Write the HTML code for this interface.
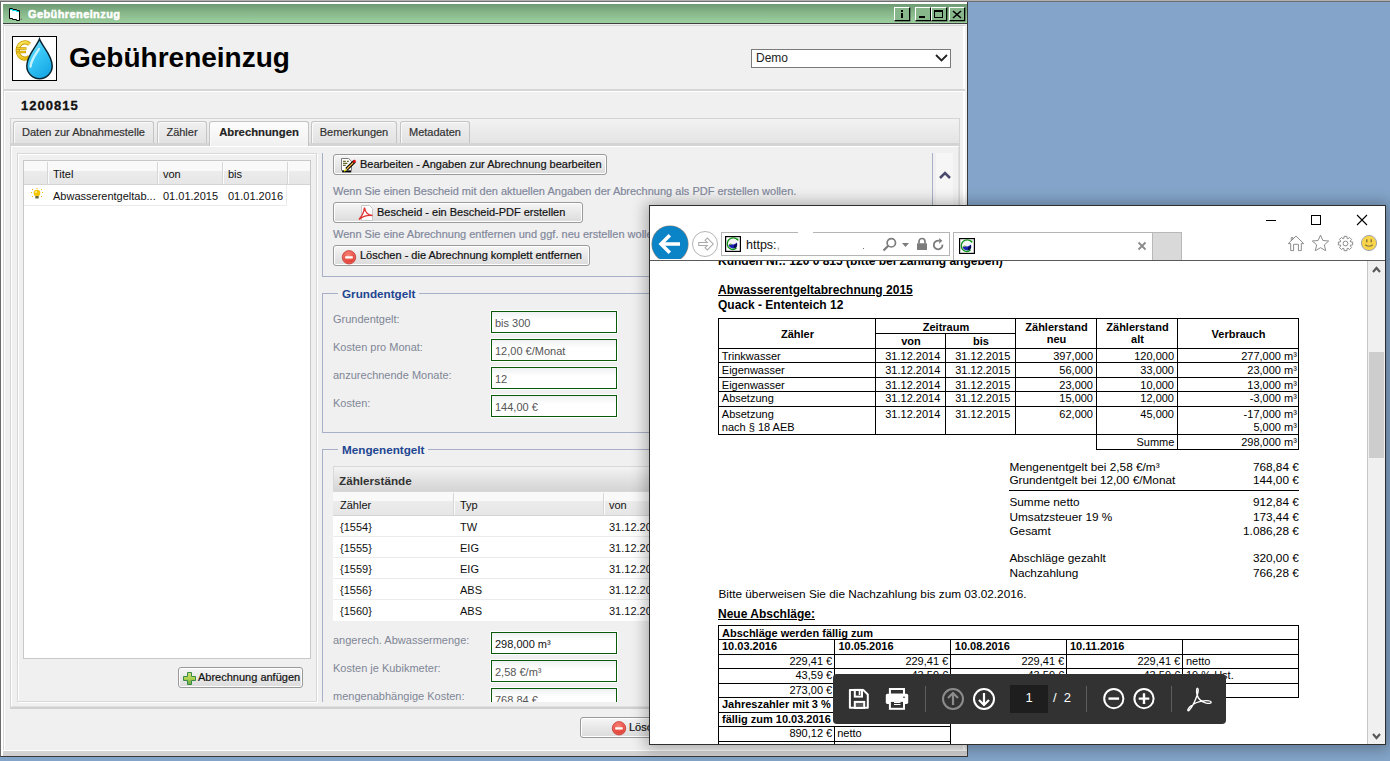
<!DOCTYPE html>
<html><head><meta charset="utf-8">
<style>
*{box-sizing:border-box;margin:0;padding:0}
html,body{width:1390px;height:761px;overflow:hidden}
body{background:#84a5c9;font-family:"Liberation Sans",sans-serif;font-size:11px;line-height:13px;color:#000;position:relative}
.a{position:absolute;white-space:nowrap}
#main{left:0;top:2px;width:968px;height:755px;background:#f0f0f0;border-left:1px solid #6a6a6a;border-bottom:1px solid #3a3a3a;border-right:1px solid #3a3a3a}
.tbar{left:3px;top:4px;width:964px;height:20px;background:linear-gradient(#6e9a72,#86b689 45%,#9ccf9f);border-bottom:1px solid #404040}
.ttl{left:28px;top:8px;color:#fff;font-weight:bold;font-size:11px;letter-spacing:0.4px;-webkit-text-stroke:.5px #fff}
.wb{width:16px;height:14px;top:7px;border-top:1px solid #fff;border-left:1px solid #fff;border-right:1px solid #000;border-bottom:1px solid #000;box-shadow:.5px .5px 0 rgba(0,0,0,.6);background:#88b68b}
.tab{-webkit-text-stroke:.2px #333;top:121px;height:22px;border:1px solid #c4c4c4;border-bottom:0;border-radius:3px 3px 0 0;background:linear-gradient(#f0f0f0,#e2e2e2);text-align:center;line-height:21px;color:#333;box-shadow:inset 1px 1px 0 #fafafa}
.tab.act{top:121px;height:25px;background:linear-gradient(#fdfdfd,#f0f0f0);font-weight:bold;color:#222;font-size:11.3px;z-index:2}
.vs{width:1px;height:22px;background:#d6d6d6;box-shadow:1px 0 0 #fcfcfc}
.btn{border:1px solid #9a9a9a;border-radius:3px;background:linear-gradient(#f6f6f6,#e8e8e8 50%,#dcdcdc);box-shadow:inset 0 0 0 1px #fff}
.gt{color:#7e8599;-webkit-text-stroke:.2px #8a90a4}
.fs{border:1px solid #a8b0c8}
.lg{font-size:11.7px;font-weight:bold;color:#1e4690;background:#f0f0f0;padding:0 4px;line-height:15px}
.lb{color:#7f8696}
.inp{width:126px;height:22px;border:1px solid #0a5a0a;background:linear-gradient(#eef0f2,#fff 40%);box-shadow:0 0 0 1px #fff;padding:5px 0 0 3px;color:#555}
.rw{left:17px;width:600px;height:21px;border-bottom:1px solid #ececec;background:#fff;color:#111}
.rw span{position:absolute;top:5px}
.ln{background:#000}
.fav{width:16px;height:16px;border:1px solid #000;background:radial-gradient(circle at 45% 40%,#f4f4f4 0,#9ab 30%,#2a3a9a 55%,#1a6a1a 80%,#fff 82%)}
.tk{-webkit-text-stroke:.2px #111}
</style></head>
<body>
<div class="a" style="left:0;top:0;width:1390px;height:1px;background:#b0b0b0"></div>
<div class="a" style="left:0;top:1px;width:1390px;height:1px;background:#6e6e6e"></div>
<!-- MAIN WINDOW -->
<div id="main" class="a"></div>
<div class="a" style="left:1px;top:2px;width:966px;height:2px;background:#fff"></div>
<div class="a" style="left:1px;top:2px;width:2px;height:754px;background:#fff"></div>
<div class="a" style="left:3px;top:25px;width:2px;height:726px;background:#d6d6d6;border-right:1px solid #fff"></div>
<div class="a" style="left:3px;top:750px;width:964px;height:6px;background:linear-gradient(#fff 0,#fff 1px,#d4d4d4 1px,#cfcfcf)"></div>
<div class="a" style="left:963px;top:25px;width:2px;height:726px;background:#fff"></div>
<div class="a tbar"></div>
<div class="a" style="left:3px;top:25px;width:962px;height:1px;background:#d6d6d6"></div>
<svg class="a" style="left:8px;top:7px" width="14" height="14" viewBox="0 0 14 14"><path d="M1.5 1.5h3l0 1h4l0 1h3v10h-3v-1h-4v-1h-3z" fill="#fff" stroke="#000" stroke-width="1"/><path d="M2 2.5h2.5v1h4v1h2.5" stroke="#00e0f0" stroke-width="1" fill="none"/><path d="M12 13l2-2v2z" fill="#777"/></svg>
<div class="a ttl">Gebühreneinzug</div>
<div class="a wb" style="left:894px"><div class="a" style="left:6px;top:2px;width:2px;height:2px;background:#000"></div><div class="a" style="left:6px;top:5px;width:2px;height:5px;background:#000"></div></div>
<div class="a wb" style="left:915px"><div class="a" style="left:3px;top:8px;width:6px;height:2px;background:#000"></div></div>
<div class="a wb" style="left:931px"><div class="a" style="left:2px;top:2px;width:9px;height:8px;border:1px solid #000;border-top-width:2px"></div></div>
<div class="a wb" style="left:949px"><svg class="a" style="left:2px;top:2px" width="10" height="9"><path d="M1 1l8 7M9 1l-8 7" stroke="#000" stroke-width="1.6"/></svg></div>

<!-- header -->
<div class="a" style="left:12px;top:36px;width:45px;height:45px;background:#fff;border:1px solid #000"></div>
<svg class="a" style="left:13px;top:37px" width="43" height="43" viewBox="0 0 43 43">
 <defs><linearGradient id="dg" x1="0" y1="0" x2="0.6" y2="1"><stop offset="0" stop-color="#a4eeff"/><stop offset=".45" stop-color="#3ccaf8"/><stop offset="1" stop-color="#18aae6"/></linearGradient>
 <linearGradient id="eg" x1="0" y1="0" x2="1" y2="1"><stop offset="0" stop-color="#fff070"/><stop offset="1" stop-color="#e0b000"/></linearGradient></defs>
 <path d="M16.5 7.2 A7.2 8.2 0 1 0 16.5 19.8" fill="none" stroke="#c89a00" stroke-width="4.2"/>
 <path d="M16.5 7.2 A7.2 8.2 0 1 0 16.5 19.8" fill="none" stroke="url(#eg)" stroke-width="2.6"/>
 <path d="M3 11.5h10.5M3 15h10" stroke="#c89a00" stroke-width="2.6"/>
 <path d="M3.5 11.5h9.5M3.5 15h9" stroke="#f2cc20" stroke-width="1.2"/>
 <path d="M26.5 2 C29.5 10 39.2 18 39.2 29 A12.7 12.7 0 0 1 13.8 29 C13.8 18 23.5 10 26.5 2Z" fill="url(#dg)" stroke="#0b2633" stroke-width="1.5"/>
 <path d="M26 12 C23 17 18.5 22 17.5 29.5" stroke="#c6f2ff" stroke-width="2.4" fill="none" stroke-linecap="round"/>
</svg>
<div class="a" style="left:69px;top:42px;font-size:28px;font-weight:bold;line-height:32px">Gebühreneinzug</div>
<div class="a" style="left:751px;top:49px;width:200px;height:19px;background:#fff;border:1px solid #7a7a7a"></div>
<div class="a" style="left:756px;top:50px;font-size:12px;line-height:16px;color:#222">Demo</div>
<svg class="a" style="left:935px;top:54px" width="13" height="8"><path d="M1 1l5.5 5.5L12 1" stroke="#222" stroke-width="1.8" fill="none"/></svg>
<div class="a" style="left:3px;top:89px;width:962px;height:2px;background:#d6d6d6"></div>
<div class="a" style="left:5px;top:91px;width:958px;height:1px;background:#fff"></div>
<div class="a" style="left:21px;top:98px;font-size:13px;font-weight:bold;letter-spacing:1px;line-height:16px;color:#111;-webkit-text-stroke:.3px #111">1200815</div>

<!-- tab panel -->
<div class="a" style="left:10px;top:118px;width:950px;height:591px;border:1px solid #d4d4d4;border-bottom:2px solid #d0d0d0;background:#f0f0f0"></div>
<div class="a" style="left:11px;top:119px;width:948px;height:24px;background:linear-gradient(#f2f2f2,#e4e4e4)"></div>
<div class="a" style="left:11px;top:143px;width:948px;height:3px;background:#d4d4d4"></div>
<div class="a" style="left:11px;top:146px;width:948px;height:561px;border:1px solid #fff;border-right-color:#e0e0e0;border-bottom-color:#e0e0e0"></div>
<div class="a tab" style="left:13px;width:141px">Daten zur Abnahmestelle</div>
<div class="a tab" style="left:157px;width:50px">Zähler</div>
<div class="a tab act" style="left:209px;width:100px">Abrechnungen</div>
<div class="a tab" style="left:311px;width:86px">Bemerkungen</div>
<div class="a tab" style="left:400px;width:70px">Metadaten</div>

<!-- left list group -->
<div class="a" style="left:17px;top:153px;width:300px;height:549px;border:1px solid #d8d8d8;box-shadow:inset 1px 1px 0 #fff, 1px 1px 0 #fff"></div>
<div class="a" style="left:23px;top:160px;width:288px;height:499px;background:#fff;border:1px solid #c8c8c8"></div>
<div class="a" style="left:24px;top:161px;width:286px;height:24px;background:linear-gradient(#f9f9f9 0,#f9f9f9 40%,#ececec 41%,#e6e6e6)"></div>
<div class="a" style="left:24px;top:184px;width:286px;height:1px;background:#d4d4d4"></div>
<div class="a vs" style="left:47px;top:162px"></div>
<div class="a vs" style="left:157px;top:162px"></div>
<div class="a vs" style="left:222px;top:162px"></div>
<div class="a vs" style="left:287px;top:162px"></div>
<div class="a" style="left:53px;top:168px;color:#111">Titel</div>
<div class="a" style="left:163px;top:168px;color:#111">von</div>
<div class="a" style="left:228px;top:168px;color:#111">bis</div>
<div class="a" style="left:24px;top:185px;width:263px;height:21px;border-bottom:1px solid #ececec;border-right:1px solid #ececec"></div>
<svg class="a" style="left:30px;top:188px" width="14" height="12" viewBox="0 0 14 12"><g fill="#f5b800"><rect x="1" y="4" width="1" height="1"/><rect x="12" y="4" width="1" height="1"/><rect x="2" y="1" width="1" height="1"/><rect x="11" y="1" width="1" height="1"/><rect x="6.5" y="0" width="1" height="1"/><rect x="2" y="8" width="1" height="1"/><rect x="11" y="8" width="1" height="1"/></g><circle cx="7" cy="5" r="3.3" fill="#f7c600"/><circle cx="6" cy="4" r="1" fill="#fff4a0"/><rect x="5.3" y="8" width="3.4" height="2.5" fill="#6a6a40"/></svg>
<div class="a" style="left:53px;top:190px;color:#111">Abwasserentgeltab...</div>
<div class="a" style="left:163px;top:190px;color:#111">01.01.2015</div>
<div class="a" style="left:228px;top:190px;color:#111">01.01.2016</div>
<div class="a btn" style="left:178px;top:667px;width:125px;height:21px"></div>
<svg class="a" style="left:182.5px;top:671.5px" width="13" height="13" viewBox="0 0 13 13"><defs><linearGradient id="pg" x1="0" y1="0" x2="0" y2="1"><stop offset="0" stop-color="#c8e070"/><stop offset=".5" stop-color="#b0d050"/><stop offset="1" stop-color="#60a840"/></linearGradient></defs><path d="M4.5 .5h4v4h4v4h-4v4h-4v-4h-4v-4h4z" fill="url(#pg)" stroke="#3a8a4a" stroke-width="1"/></svg>
<div class="a tk" style="left:198px;top:671px;color:#111">Abrechnung anfügen</div>

<!-- right scroll area -->
<div class="a" style="left:322px;top:153px;width:1px;height:123px;background:#a8b0c8"></div>
<div class="a" style="left:322px;top:276px;width:611px;height:1px;background:#a8b0c8"></div>
<div class="a" style="left:932px;top:153px;width:1px;height:123px;background:#a8b0c8"></div>
<div class="a" style="left:936px;top:153px;width:17px;height:549px;background:#f6f6f6"></div>
<svg class="a" style="left:939px;top:170px" width="12" height="10"><path d="M1 8L6 3l5 5" stroke="#4a4a6e" stroke-width="2.6" fill="none"/></svg>

<div class="a btn" style="left:333px;top:154px;width:274px;height:21px"></div>
<svg class="a" style="left:341px;top:158px" width="16" height="15" viewBox="0 0 16 15"><path d="M.5 .5H7.7L10.5 3.3V12.5H.5Z" fill="#fff" stroke="#7a7a7a" stroke-width="1"/><path d="M2 3.4h2.8M6 3.4h1.8M2 5.4h4.5M2 7.4h2.8" stroke="#6a6a2a" stroke-width="1.1"/><path d="M1.2 13.6h9" stroke="#000" stroke-width="1.6"/><path d="M5.5 11.3L13.6 3.2" stroke="#000" stroke-width="3.4"/><path d="M5.8 11L12.2 4.6" stroke="#ffc040" stroke-width="1.3"/><path d="M12.3 4.5L14.4 2.4" stroke="#e81010" stroke-width="2.4"/><path d="M3.2 13.2l1.8-1.6" stroke="#f0f000" stroke-width="1.4"/></svg>
<div class="a tk" style="left:360px;top:158px;color:#111">Bearbeiten - Angaben zur Abrechnung bearbeiten</div>
<div class="a gt" style="left:333px;top:185px">Wenn Sie einen Bescheid mit den aktuellen Angaben der Abrechnung als PDF erstellen wollen.</div>
<div class="a btn" style="left:333px;top:202px;width:250px;height:21px"></div>
<svg class="a" style="left:358px;top:205px" width="16" height="16" viewBox="0 0 16 16"><path d="M3.5 0.5h8l3 3v12h-11z" fill="#fff" stroke="#c8c8c8"/><path d="M1 14.5C4 11 6 7 6.5 2.5 7 6 9 10 14.5 10.5 10 10 5 11 1 14.5z" fill="none" stroke="#e03030" stroke-width="1.4"/></svg>
<div class="a tk" style="left:377px;top:206px;color:#111">Bescheid - ein Bescheid-PDF erstellen</div>
<div class="a gt" style="left:333px;top:228px">Wenn Sie eine Abrechnung entfernen und ggf. neu erstellen wollen.</div>
<div class="a btn" style="left:333px;top:245px;width:257px;height:21px"></div>
<svg class="a" style="left:341px;top:248.5px" width="16" height="16" viewBox="0 0 16 16"><defs><radialGradient id="rg" cx=".45" cy=".35" r=".7"><stop offset="0" stop-color="#f88a7a"/><stop offset=".6" stop-color="#e84a40"/><stop offset="1" stop-color="#d03028"/></radialGradient></defs><circle cx="8" cy="8.3" r="6.7" fill="url(#rg)" stroke="#c8403a" stroke-width=".8"/><circle cx="8" cy="8.3" r="5.6" fill="none" stroke="#f8b0a8" stroke-width=".5" opacity=".6"/><rect x="4.2" y="7.2" width="7.6" height="2.3" rx=".3" fill="#fff"/></svg>
<div class="a tk" style="left:360px;top:249px;color:#111">Löschen - die Abrechnung komplett entfernen</div>

<!-- Grundentgelt -->
<div class="a fs" style="left:322px;top:293px;width:611px;height:140px"></div>
<div class="a lg" style="left:338px;top:286px">Grundentgelt</div>
<div class="a lb" style="left:333px;top:313px">Grundentgelt:</div>
<div class="a lb" style="left:333px;top:341px">Kosten pro Monat:</div>
<div class="a lb" style="left:333px;top:369px">anzurechnende Monate:</div>
<div class="a lb" style="left:333px;top:397px">Kosten:</div>
<div class="a inp" style="left:491px;top:311px">bis 300</div>
<div class="a inp" style="left:491px;top:339px">12,00 €/Monat</div>
<div class="a inp" style="left:491px;top:367px">12</div>
<div class="a inp" style="left:491px;top:395px">144,00 €</div>

<!-- Mengenentgelt (clipped) -->
<div class="a" style="left:316px;top:440px;width:620px;height:262px;overflow:hidden">
 <div class="a fs" style="left:6px;top:9px;width:611px;height:400px"></div>
 <div class="a lg" style="left:22px;top:2px">Mengenentgelt</div>
 <div class="a" style="left:17px;top:26px;width:600px;height:26px;background:linear-gradient(#f4f4f4,#e6e6e6 40%,#d4d4d4);border:1px solid #d8d8d8"></div>
 <div class="a" style="left:23px;top:34px;font-size:11.7px;font-weight:bold;color:#333">Zählerstände</div>
 <div class="a" style="left:17px;top:52px;width:600px;height:24px;background:linear-gradient(#f9f9f9 0,#f9f9f9 40%,#ececec 41%,#e6e6e6);border-bottom:1px solid #d4d4d4"></div>
 <div class="a vs" style="left:137px;top:53px;height:22px"></div>
 <div class="a vs" style="left:287px;top:53px;height:22px"></div>
 <div class="a" style="left:24px;top:59px;color:#111">Zähler</div>
 <div class="a" style="left:144px;top:59px;color:#111">Typ</div>
 <div class="a" style="left:293px;top:59px;color:#111">von</div>
 <div class="a" style="left:17px;top:76px;width:600px;height:104px;background:#fff"></div>
 <div class="a rw" style="top:76px"><span style="left:7px">{1554}</span><span style="left:127px">TW</span><span style="left:276px">31.12.2014</span></div>
 <div class="a rw" style="top:97px"><span style="left:7px">{1555}</span><span style="left:127px">EIG</span><span style="left:276px">31.12.2014</span></div>
 <div class="a rw" style="top:118px"><span style="left:7px">{1559}</span><span style="left:127px">EIG</span><span style="left:276px">31.12.2014</span></div>
 <div class="a rw" style="top:139px"><span style="left:7px">{1556}</span><span style="left:127px">ABS</span><span style="left:276px">31.12.2014</span></div>
 <div class="a rw" style="top:160px;border-bottom:0"><span style="left:7px">{1560}</span><span style="left:127px">ABS</span><span style="left:276px">31.12.2014</span></div>
 <div class="a lb" style="left:17px;top:194px">angerech. Abwassermenge:</div>
 <div class="a lb" style="left:17px;top:222px">Kosten je Kubikmeter:</div>
 <div class="a lb" style="left:17px;top:250px">mengenabhängige Kosten:</div>
 <div class="a inp" style="left:175px;top:192px;color:#111">298,000 m³</div>
 <div class="a inp" style="left:175px;top:220px">2,58 €/m³</div>
 <div class="a inp" style="left:175px;top:248px">768,84 €</div>
</div>

<!-- bottom Löschen button -->
<div class="a btn" style="left:580px;top:717px;width:120px;height:21px"></div>
<svg class="a" style="left:611px;top:720px" width="16" height="16" viewBox="0 0 16 16"><circle cx="8" cy="8.3" r="6.7" fill="url(#rg)" stroke="#c8403a" stroke-width=".8"/><circle cx="8" cy="8.3" r="5.6" fill="none" stroke="#f8b0a8" stroke-width=".5" opacity=".6"/><rect x="4.2" y="7.2" width="7.6" height="2.3" rx=".3" fill="#fff"/></svg>
<div class="a tk" style="left:629px;top:721px;color:#111">Löschen</div>
<!-- BROWSER WINDOW -->
<div class="a" style="left:649px;top:205px;width:737px;height:540px;background:#fff;border:1px solid #2e2e2e;box-shadow:0 1px 14px 3px rgba(0,0,0,.3)"></div>
<!-- caption buttons -->
<div class="a" style="left:1266px;top:220px;width:10px;height:1px;background:#000"></div>
<div class="a" style="left:1311px;top:215px;width:10px;height:10px;border:1px solid #000"></div>
<svg class="a" style="left:1356px;top:214px" width="12" height="12"><path d="M1 1l10 10M11 1L1 11" stroke="#000" stroke-width="1.1"/></svg>
<!-- back/forward -->
<div class="a" style="left:650px;top:206px;width:735px;height:53px;overflow:hidden">
 <div class="a" style="left:1.7px;top:19.5px;width:36.6px;height:36.6px;border-radius:50%;background:#0a84c6;box-shadow:0 0 0 .6px #9a8a80"></div>
</div>
<svg class="a" style="left:656px;top:231px" width="28" height="26" viewBox="0 0 28 26"><path d="M24 13H6M13.8 4.2L5 13l8.8 8.8" stroke="#fff" stroke-width="3.5" fill="none"/></svg>
<div class="a" style="left:692px;top:231px;width:26px;height:26px;border-radius:50%;border:1px solid #b4b4b4;background:#fff"></div>
<svg class="a" style="left:697px;top:236px" width="18" height="17" viewBox="0 0 18 17"><path d="M1.2 8H13.5M8.8 2.8l5.2 5.2-5.2 5.2" stroke="#a8a8a8" stroke-width="4.2" fill="none"/><path d="M2.2 8H13.5M9.5 3.5l4.5 4.5-4.5 4.5" stroke="#fff" stroke-width="2.2" fill="none"/></svg>
<!-- address bar -->
<div class="a" style="left:721px;top:232px;width:229px;height:24px;border:1px solid #b4b4b4;background:#fff"></div>
<div class="a" style="left:798px;top:231px;width:15px;height:2px;background:#fff"></div>
<div class="a" style="left:725px;top:236px;width:16px;height:16px"><svg width="16" height="16" viewBox="0 0 16 16"><rect x=".6" y=".6" width="14.8" height="14.8" fill="#fff" stroke="#000" stroke-width="1.2"/><circle cx="7.8" cy="7.6" r="4.6" fill="#f4f4f8"/><path d="M3.4 9.2Q6 7.6 8.5 8.6 11 7.5 12 6.5 12.8 9 11.5 11.2 9.5 12.8 7 12.3 4.5 11.6 3.4 9.2z" fill="#1a22b0"/><path d="M9 9.5q1.5-.5 2.8-2.5l.3 2.5-1.5 2.5-1.6.5z" fill="#0a0a50"/><path d="M3.8 8.6l2-.6 1 .4" stroke="#6a9a30" stroke-width=".9" fill="none"/><path d="M12.5 3.6Q10 1.2 6.5 2.2 2.5 3.6 2.3 7.8 2.4 12 6 13.2 9.2 14.2 11.6 11.8" stroke="#12941a" stroke-width="1.3" fill="none"/><path d="M10.5 2.4l3 .4-.4 2.5z" fill="#12941a"/></svg></div>
<div class="a" style="left:746px;top:238px;font-size:12.5px;line-height:14px;color:#111">https:<span style="color:#999">,</span></div>
<div class="a" style="left:863px;top:248px;width:1px;height:1px;background:#777"></div>
<svg class="a" style="left:882px;top:237px" width="16" height="15" viewBox="0 0 16 15"><circle cx="9.3" cy="5.8" r="4.2" stroke="#7c7c7c" stroke-width="1.7" fill="none"/><path d="M6.3 8.8L1.5 13.5" stroke="#7c7c7c" stroke-width="2.2"/></svg>
<svg class="a" style="left:901px;top:242px" width="9" height="6"><path d="M1 1h7l-3.5 4z" fill="#7c7c7c"/></svg>
<svg class="a" style="left:916px;top:237px" width="12" height="14" viewBox="0 0 12 14"><path d="M3 6.5V4.5a3 3 0 0 1 6 0v2" stroke="#7c7c7c" stroke-width="1.7" fill="none"/><rect x="1" y="6.3" width="10" height="6.7" rx=".6" fill="#7c7c7c"/></svg>
<svg class="a" style="left:932px;top:237px" width="13" height="14" viewBox="0 0 13 14"><path d="M7 3.8A4.3 4.3 0 1 0 10.4 7.6" stroke="#7c7c7c" stroke-width="1.8" fill="none"/><path d="M10.3 3.8L7.2 .9v5.9z" fill="#7c7c7c"/></svg>
<!-- tab -->
<div class="a" style="left:953px;top:232px;width:200px;height:29px;border:1px solid #b4b4b4;border-bottom:0;background:#fff"></div>
<div class="a" style="left:959px;top:238px;width:16px;height:16px"><svg width="16" height="16" viewBox="0 0 16 16"><rect x=".6" y=".6" width="14.8" height="14.8" fill="#fff" stroke="#000" stroke-width="1.2"/><circle cx="7.8" cy="7.6" r="4.6" fill="#f4f4f8"/><path d="M3.4 9.2Q6 7.6 8.5 8.6 11 7.5 12 6.5 12.8 9 11.5 11.2 9.5 12.8 7 12.3 4.5 11.6 3.4 9.2z" fill="#1a22b0"/><path d="M9 9.5q1.5-.5 2.8-2.5l.3 2.5-1.5 2.5-1.6.5z" fill="#0a0a50"/><path d="M3.8 8.6l2-.6 1 .4" stroke="#6a9a30" stroke-width=".9" fill="none"/><path d="M12.5 3.6Q10 1.2 6.5 2.2 2.5 3.6 2.3 7.8 2.4 12 6 13.2 9.2 14.2 11.6 11.8" stroke="#12941a" stroke-width="1.3" fill="none"/><path d="M10.5 2.4l3 .4-.4 2.5z" fill="#12941a"/></svg></div>
<svg class="a" style="left:1137px;top:241px" width="10" height="10"><path d="M1.5 1.5l7 7M8.5 1.5l-7 7" stroke="#8a8a8a" stroke-width="1.8"/></svg>
<div class="a" style="left:1152px;top:232px;width:30px;height:28px;background:#d9d9d9;border:1px solid #b8b8b8;border-bottom:0"></div>
<!-- right icons -->
<svg class="a" style="left:1287px;top:235px" width="18" height="17" viewBox="0 0 18 17"><path d="M1.3 8.6L9 1.1l7.7 7.5H14.3V15.6H11.4V9.3H6.6V15.6H3.7V8.6Z M4.3 5.8V2.6H6V4.2" stroke="#8c8c8c" stroke-width="1" fill="none" stroke-linejoin="round"/></svg>
<svg class="a" style="left:1311px;top:234px" width="19" height="18" viewBox="0 0 19 18"><path d="M9.5 1.2l2.4 5.3 5.8.5-4.4 3.9 1.4 5.8-5.2-3-5.2 3 1.4-5.8L1.3 7l5.8-.5z" stroke="#8c8c8c" stroke-width="1" fill="none" stroke-linejoin="round"/></svg>
<svg class="a" style="left:1336.5px;top:234.5px" width="17" height="17" viewBox="0 0 17 17"><path d="M13.56 6.93 L15.65 7.05 L15.65 9.95 L13.56 10.07 L13.19 10.97 L14.58 12.53 L12.53 14.58 L10.97 13.19 L10.07 13.56 L9.95 15.65 L7.05 15.65 L6.93 13.56 L6.03 13.19 L4.47 14.58 L2.42 12.53 L3.81 10.97 L3.44 10.07 L1.35 9.95 L1.35 7.05 L3.44 6.93 L3.81 6.03 L2.42 4.47 L4.47 2.42 L6.03 3.81 L6.93 3.44 L7.05 1.35 L9.95 1.35 L10.07 3.44 L10.97 3.81 L12.53 2.42 L14.58 4.47 L13.19 6.03Z" fill="none" stroke="#8c8c8c" stroke-width="1" stroke-linejoin="round"/><circle cx="8.5" cy="8.5" r="2.4" fill="none" stroke="#8c8c8c" stroke-width="1"/></svg>
<svg class="a" style="left:1360px;top:234px" width="18" height="18" viewBox="0 0 18 18"><circle cx="9" cy="9" r="7.6" fill="#f8d54a" stroke="#a0a4b0" stroke-width="1"/><rect x="6" y="5.3" width="1.5" height="3" fill="#8a7a40"/><rect x="10.5" y="5.3" width="1.5" height="3" fill="#8a7a40"/><path d="M5.2 10.8q3.8 3 7.6 0" stroke="#8a7a40" stroke-width="1.1" fill="none"/></svg>
<!-- toolbar bottom line -->
<div class="a" style="left:650px;top:260px;width:735px;height:1px;background:#5a5a5a"></div>
<!-- scrollbar -->
<div class="a" style="left:1367px;top:261px;width:18px;height:483px;background:#f0f0f0;border-left:1px solid #c6c6c6"></div>
<svg class="a" style="left:1372px;top:266px" width="9" height="7"><path d="M1 6l3.5-4L8 6" stroke="#5a5a5a" stroke-width="2.2" fill="none"/></svg>
<div class="a" style="left:1369px;top:352px;width:15px;height:106px;background:#cdcdcd"></div>
<svg class="a" style="left:1372px;top:733px" width="9" height="7"><path d="M1 1l3.5 4L8 1" stroke="#5a5a5a" stroke-width="2.2" fill="none"/></svg>

<!-- PDF CONTENT -->
<div class="a" style="left:650px;top:261px;width:717px;height:483px;overflow:hidden" id="pdf">
<div class="a" style="top:-5.86px;font-size:12px;line-height:13.40px;font-weight:bold;left:68.00px;">Kunden Nr.: 120 0 815 (bitte bei Zahlung angeben)</div>
<div class="a" style="top:22.84px;font-size:12px;line-height:13.40px;font-weight:bold;left:68.00px;text-decoration:underline;">Abwasserentgeltabrechnung 2015</div>
<div class="a" style="top:37.74px;font-size:12px;line-height:13.40px;font-weight:bold;left:68.00px;">Quack - Ententeich 12</div>
<div class="a ln" style="left:68.0px;top:57.0px;width:581.0px;height:1px"></div>
<div class="a ln" style="left:68.0px;top:87.0px;width:581.0px;height:1px"></div>
<div class="a ln" style="left:68.0px;top:101.0px;width:581.0px;height:1px"></div>
<div class="a ln" style="left:68.0px;top:116.0px;width:581.0px;height:1px"></div>
<div class="a ln" style="left:68.0px;top:130.0px;width:581.0px;height:1px"></div>
<div class="a ln" style="left:68.0px;top:145.0px;width:581.0px;height:1px"></div>
<div class="a ln" style="left:68.0px;top:173.0px;width:581.0px;height:1px"></div>
<div class="a ln" style="left:225.0px;top:72.0px;width:141.0px;height:1px"></div>
<div class="a ln" style="left:68.0px;top:57.0px;width:1px;height:117.0px"></div>
<div class="a ln" style="left:225.0px;top:57.0px;width:1px;height:117.0px"></div>
<div class="a ln" style="left:365.0px;top:57.0px;width:1px;height:117.0px"></div>
<div class="a ln" style="left:446.0px;top:57.0px;width:1px;height:117.0px"></div>
<div class="a ln" style="left:527.0px;top:57.0px;width:1px;height:117.0px"></div>
<div class="a ln" style="left:648.0px;top:57.0px;width:1px;height:117.0px"></div>
<div class="a ln" style="left:295.0px;top:72.0px;width:1px;height:102.0px"></div>
<div class="a ln" style="left:446.0px;top:173.0px;width:1px;height:16.0px"></div>
<div class="a ln" style="left:527.0px;top:173.0px;width:1px;height:16.0px"></div>
<div class="a ln" style="left:648.0px;top:173.0px;width:1px;height:16.0px"></div>
<div class="a ln" style="left:446.0px;top:188.0px;width:203.0px;height:1px"></div>
<div class="a" style="top:66.75px;font-size:11px;line-height:12.29px;font-weight:bold;left:69.00px;width:157.00px;text-align:center;">Zähler</div>
<div class="a" style="top:59.85px;font-size:11px;line-height:12.29px;font-weight:bold;left:226.00px;width:140.00px;text-align:center;">Zeitraum</div>
<div class="a" style="top:74.05px;font-size:11px;line-height:12.29px;font-weight:bold;left:226.00px;width:70.00px;text-align:center;">von</div>
<div class="a" style="top:74.05px;font-size:11px;line-height:12.29px;font-weight:bold;left:296.00px;width:70.00px;text-align:center;">bis</div>
<div class="a" style="top:59.85px;font-size:11px;line-height:12.29px;font-weight:bold;left:366.00px;width:81.00px;text-align:center;">Zählerstand</div>
<div class="a" style="top:72.35px;font-size:11px;line-height:12.29px;font-weight:bold;left:366.00px;width:81.00px;text-align:center;">neu</div>
<div class="a" style="top:59.85px;font-size:11px;line-height:12.29px;font-weight:bold;left:447.00px;width:81.00px;text-align:center;">Zählerstand</div>
<div class="a" style="top:72.35px;font-size:11px;line-height:12.29px;font-weight:bold;left:447.00px;width:81.00px;text-align:center;">alt</div>
<div class="a" style="top:66.75px;font-size:11px;line-height:12.29px;font-weight:bold;left:528.00px;width:121.00px;text-align:center;">Verbrauch</div>
<div class="a" style="top:88.85px;font-size:11px;line-height:12.29px;left:71.80px;">Trinkwasser</div>
<div class="a" style="top:88.85px;font-size:11px;line-height:12.29px;right:426.70px;">31.12.2014</div>
<div class="a" style="top:88.85px;font-size:11px;line-height:12.29px;right:356.70px;">31.12.2015</div>
<div class="a" style="top:88.85px;font-size:11px;line-height:12.29px;right:274.00px;">397,000</div>
<div class="a" style="top:88.85px;font-size:11px;line-height:12.29px;right:193.00px;">120,000</div>
<div class="a" style="top:88.85px;font-size:11px;line-height:12.29px;right:70.20px;">277,000 m³</div>
<div class="a" style="top:102.94px;font-size:11px;line-height:12.29px;left:71.80px;">Eigenwasser</div>
<div class="a" style="top:102.94px;font-size:11px;line-height:12.29px;right:426.70px;">31.12.2014</div>
<div class="a" style="top:102.94px;font-size:11px;line-height:12.29px;right:356.70px;">31.12.2015</div>
<div class="a" style="top:102.94px;font-size:11px;line-height:12.29px;right:274.00px;">56,000</div>
<div class="a" style="top:102.94px;font-size:11px;line-height:12.29px;right:193.00px;">33,000</div>
<div class="a" style="top:102.94px;font-size:11px;line-height:12.29px;right:70.20px;">23,000 m³</div>
<div class="a" style="top:117.65px;font-size:11px;line-height:12.29px;left:71.80px;">Eigenwasser</div>
<div class="a" style="top:117.65px;font-size:11px;line-height:12.29px;right:426.70px;">31.12.2014</div>
<div class="a" style="top:117.65px;font-size:11px;line-height:12.29px;right:356.70px;">31.12.2015</div>
<div class="a" style="top:117.65px;font-size:11px;line-height:12.29px;right:274.00px;">23,000</div>
<div class="a" style="top:117.65px;font-size:11px;line-height:12.29px;right:193.00px;">10,000</div>
<div class="a" style="top:117.65px;font-size:11px;line-height:12.29px;right:70.20px;">13,000 m³</div>
<div class="a" style="top:131.44px;font-size:11px;line-height:12.29px;left:71.80px;">Absetzung</div>
<div class="a" style="top:131.44px;font-size:11px;line-height:12.29px;right:426.70px;">31.12.2014</div>
<div class="a" style="top:131.44px;font-size:11px;line-height:12.29px;right:356.70px;">31.12.2015</div>
<div class="a" style="top:131.44px;font-size:11px;line-height:12.29px;right:274.00px;">15,000</div>
<div class="a" style="top:131.44px;font-size:11px;line-height:12.29px;right:193.00px;">12,000</div>
<div class="a" style="top:131.44px;font-size:11px;line-height:12.29px;right:70.20px;">-3,000 m³</div>
<div class="a" style="top:146.55px;font-size:11px;line-height:12.29px;left:71.80px;">Absetzung</div>
<div class="a" style="top:146.55px;font-size:11px;line-height:12.29px;right:426.70px;">31.12.2014</div>
<div class="a" style="top:146.55px;font-size:11px;line-height:12.29px;right:356.70px;">31.12.2015</div>
<div class="a" style="top:146.55px;font-size:11px;line-height:12.29px;right:274.00px;">62,000</div>
<div class="a" style="top:146.55px;font-size:11px;line-height:12.29px;right:193.00px;">45,000</div>
<div class="a" style="top:146.55px;font-size:11px;line-height:12.29px;right:70.20px;">-17,000 m³</div>
<div class="a" style="top:160.05px;font-size:11px;line-height:12.29px;left:71.80px;">nach § 18 AEB</div>
<div class="a" style="top:160.05px;font-size:11px;line-height:12.29px;right:70.20px;">5,000 m³</div>
<div class="a" style="top:175.05px;font-size:11px;line-height:12.29px;right:192.60px;">Summe</div>
<div class="a" style="top:175.05px;font-size:11px;line-height:12.29px;right:70.20px;">298,000 m³</div>
<div class="a" style="top:199.62px;font-size:11.8px;line-height:13.18px;left:359.40px;">Mengenentgelt bei 2,58 €/m³</div>
<div class="a" style="top:199.62px;font-size:11.8px;line-height:13.18px;right:68.20px;">768,84 €</div>
<div class="a" style="top:212.92px;font-size:11.8px;line-height:13.18px;left:359.40px;">Grundentgelt bei 12,00 €/Monat</div>
<div class="a" style="top:212.92px;font-size:11.8px;line-height:13.18px;right:68.20px;">144,00 €</div>
<div class="a" style="top:235.32px;font-size:11.8px;line-height:13.18px;left:359.40px;">Summe netto</div>
<div class="a" style="top:235.32px;font-size:11.8px;line-height:13.18px;right:68.20px;">912,84 €</div>
<div class="a" style="top:249.72px;font-size:11.8px;line-height:13.18px;left:359.40px;">Umsatzsteuer 19 %</div>
<div class="a" style="top:249.72px;font-size:11.8px;line-height:13.18px;right:68.20px;">173,44 €</div>
<div class="a" style="top:263.62px;font-size:11.8px;line-height:13.18px;left:359.40px;">Gesamt</div>
<div class="a" style="top:263.62px;font-size:11.8px;line-height:13.18px;right:68.20px;">1.086,28 €</div>
<div class="a" style="top:291.02px;font-size:11.8px;line-height:13.18px;left:359.40px;">Abschläge gezahlt</div>
<div class="a" style="top:291.02px;font-size:11.8px;line-height:13.18px;right:68.20px;">320,00 €</div>
<div class="a" style="top:305.52px;font-size:11.8px;line-height:13.18px;left:359.40px;">Nachzahlung</div>
<div class="a" style="top:305.52px;font-size:11.8px;line-height:13.18px;right:68.20px;">766,28 €</div>
<div class="a ln" style="left:359.0px;top:229.0px;width:290.0px;height:1px"></div>
<div class="a" style="top:327.12px;font-size:11.8px;line-height:13.18px;left:68.40px;">Bitte überweisen Sie die Nachzahlung bis zum 03.02.2016.</div>
<div class="a" style="top:347.04px;font-size:12px;line-height:13.40px;font-weight:bold;left:68.00px;text-decoration:underline;">Neue Abschläge:</div>
<div class="a ln" style="left:68.0px;top:364.0px;width:581.0px;height:1px"></div>
<div class="a ln" style="left:68.0px;top:378.0px;width:581.0px;height:1px"></div>
<div class="a ln" style="left:68.0px;top:393.0px;width:581.0px;height:1px"></div>
<div class="a ln" style="left:68.0px;top:407.0px;width:581.0px;height:1px"></div>
<div class="a ln" style="left:68.0px;top:422.0px;width:581.0px;height:1px"></div>
<div class="a ln" style="left:68.0px;top:436.0px;width:581.0px;height:1px"></div>
<div class="a ln" style="left:68.0px;top:451.0px;width:233.0px;height:1px"></div>
<div class="a ln" style="left:68.0px;top:465.0px;width:233.0px;height:1px"></div>
<div class="a ln" style="left:68.0px;top:480.0px;width:233.0px;height:1px"></div>
<div class="a ln" style="left:68.0px;top:364.0px;width:1px;height:120.0px"></div>
<div class="a ln" style="left:648.0px;top:364.0px;width:1px;height:73.0px"></div>
<div class="a ln" style="left:184.0px;top:378.0px;width:1px;height:59.0px"></div>
<div class="a ln" style="left:300.0px;top:378.0px;width:1px;height:59.0px"></div>
<div class="a ln" style="left:416.0px;top:378.0px;width:1px;height:59.0px"></div>
<div class="a ln" style="left:532.0px;top:378.0px;width:1px;height:59.0px"></div>
<div class="a ln" style="left:300.0px;top:436.0px;width:1px;height:48.0px"></div>
<div class="a ln" style="left:184.0px;top:465.0px;width:1px;height:19.0px"></div>
<div class="a" style="top:365.54px;font-size:11px;line-height:12.29px;font-weight:bold;left:72.00px;">Abschläge werden fällig zum</div>
<div class="a" style="top:379.44px;font-size:11px;line-height:12.29px;font-weight:bold;left:72.00px;">10.03.2016</div>
<div class="a" style="top:379.44px;font-size:11px;line-height:12.29px;font-weight:bold;left:188.50px;">10.05.2016</div>
<div class="a" style="top:379.44px;font-size:11px;line-height:12.29px;font-weight:bold;left:304.80px;">10.08.2016</div>
<div class="a" style="top:379.44px;font-size:11px;line-height:12.29px;font-weight:bold;left:420.00px;">10.11.2016</div>
<div class="a" style="top:394.04px;font-size:11px;line-height:12.29px;right:534.80px;">229,41 €</div>
<div class="a" style="top:408.34px;font-size:11px;line-height:12.29px;right:534.80px;">43,59 €</div>
<div class="a" style="top:423.04px;font-size:11px;line-height:12.29px;right:534.80px;">273,00 €</div>
<div class="a" style="top:394.04px;font-size:11px;line-height:12.29px;right:418.80px;">229,41 €</div>
<div class="a" style="top:408.34px;font-size:11px;line-height:12.29px;right:418.80px;">43,59 €</div>
<div class="a" style="top:423.04px;font-size:11px;line-height:12.29px;right:418.80px;">273,00 €</div>
<div class="a" style="top:394.04px;font-size:11px;line-height:12.29px;right:302.80px;">229,41 €</div>
<div class="a" style="top:408.34px;font-size:11px;line-height:12.29px;right:302.80px;">43,59 €</div>
<div class="a" style="top:423.04px;font-size:11px;line-height:12.29px;right:302.80px;">273,00 €</div>
<div class="a" style="top:394.04px;font-size:11px;line-height:12.29px;right:186.80px;">229,41 €</div>
<div class="a" style="top:408.34px;font-size:11px;line-height:12.29px;right:186.80px;">43,59 €</div>
<div class="a" style="top:423.04px;font-size:11px;line-height:12.29px;right:186.80px;">273,00 €</div>
<div class="a" style="top:394.04px;font-size:11px;line-height:12.29px;left:536.00px;">netto</div>
<div class="a" style="top:408.34px;font-size:11px;line-height:12.29px;left:536.00px;">19 % Ust.</div>
<div class="a" style="top:423.04px;font-size:11px;line-height:12.29px;left:536.00px;">brutto</div>
<div class="a" style="top:437.34px;font-size:11px;line-height:12.29px;font-weight:bold;left:72.00px;">Jahreszahler mit 3 % Skonto</div>
<div class="a" style="top:452.44px;font-size:11px;line-height:12.29px;font-weight:bold;left:72.00px;">fällig zum 10.03.2016</div>
<div class="a" style="top:466.25px;font-size:11px;line-height:12.29px;right:534.80px;">890,12 €</div>
<div class="a" style="top:466.25px;font-size:11px;line-height:12.29px;left:187.20px;">netto</div>
</div>
<!-- PDF toolbar -->
<div class="a" style="left:833px;top:674px;width:393px;height:50px;background:#323232;border-radius:4px"></div>
<svg class="a" style="left:848px;top:688px" width="22" height="22" viewBox="0 0 22 22"><path d="M1.9 1.9H15.2L19.8 6.5V19.8H1.9Z" fill="none" stroke="#fff" stroke-width="2" stroke-linejoin="round"/><rect x="6.8" y="1.9" width="7.2" height="6.7" fill="none" stroke="#fff" stroke-width="2"/><rect x="10.7" y="3" width="1.7" height="4" fill="#fff"/><rect x="6.8" y="13.9" width="9.4" height="6" fill="#5a5a5a" stroke="#fff" stroke-width="2"/></svg>
<svg class="a" style="left:885px;top:687px" width="24" height="23" viewBox="0 0 24 23"><rect x="4.9" y="2" width="14.1" height="5.7" fill="none" stroke="#fff" stroke-width="2"/><rect x=".8" y="6.8" width="22.4" height="10.1" rx="1.6" fill="#fff"/><rect x="18" y="9.7" width="2" height="1" fill="#323232"/><rect x="4.9" y="13.9" width="14.1" height="7.9" fill="#323232" stroke="#fff" stroke-width="2"/><path d="M9 15.4h6.5M9 17.5h6.5" stroke="#fff" stroke-width="1.1"/></svg>
<div class="a" style="left:925px;top:686px;width:1px;height:26px;background:#5e5e5e"></div>
<svg class="a" style="left:941px;top:687px" width="24" height="24" viewBox="0 0 24 24"><circle cx="12" cy="12" r="10" fill="none" stroke="#8c8c8c" stroke-width="2"/><path d="M12 18V6.5M7 11l5-5 5 5" fill="none" stroke="#8c8c8c" stroke-width="2.2"/></svg>
<svg class="a" style="left:971.5px;top:687px" width="24" height="24" viewBox="0 0 24 24"><circle cx="12" cy="12" r="10" fill="none" stroke="#fff" stroke-width="2"/><path d="M12 6v11.5M7 13l5 5 5-5" fill="none" stroke="#fff" stroke-width="2.2"/></svg>
<div class="a" style="left:1010px;top:685px;width:38px;height:28px;background:#1e1e1e"></div>
<div class="a" style="left:1010px;top:690px;width:38px;text-align:center;color:#fff;font-size:13px;line-height:16px">1</div>
<div class="a" style="left:1053px;top:690px;color:#fff;font-size:13px;line-height:16px">/&nbsp;&nbsp;2</div>
<div class="a" style="left:1086px;top:686px;width:1px;height:26px;background:#5e5e5e"></div>
<svg class="a" style="left:1102px;top:687px" width="24" height="24" viewBox="0 0 24 24"><circle cx="11.8" cy="11.6" r="9.6" fill="none" stroke="#fff" stroke-width="2"/><path d="M6.5 11.6h10.6" stroke="#fff" stroke-width="2.4"/></svg>
<svg class="a" style="left:1132px;top:687px" width="24" height="24" viewBox="0 0 24 24"><circle cx="12" cy="11.6" r="9.6" fill="none" stroke="#fff" stroke-width="2"/><path d="M6.7 11.6h10.6M12 6.3v10.6" stroke="#fff" stroke-width="2.4"/></svg>
<div class="a" style="left:1171px;top:686px;width:1px;height:26px;background:#5e5e5e"></div>
<svg class="a" style="left:1186px;top:687px" width="26" height="25" viewBox="0 0 26 25"><path d="M3.5 22.8C6.5 19.5 9.5 13 11.2 8 12.4 4.5 12.6 1.4 11.6 1.3 10.6 1.2 10.2 4.2 11 7.5 12 11.5 15.5 14.8 19.5 15.8 22.5 16.6 25.2 16.6 25.2 15.3 25.2 13.8 21.5 13.4 17.5 13.8 12 14.4 7.2 16.8 4.2 19.6 1.6 22 1.4 23.6 2.2 23.8 2.7 23.9 3.1 23.3 3.5 22.8Z" fill="none" stroke="#fff" stroke-width="1.35" stroke-linejoin="round"/></svg>
</body></html>
